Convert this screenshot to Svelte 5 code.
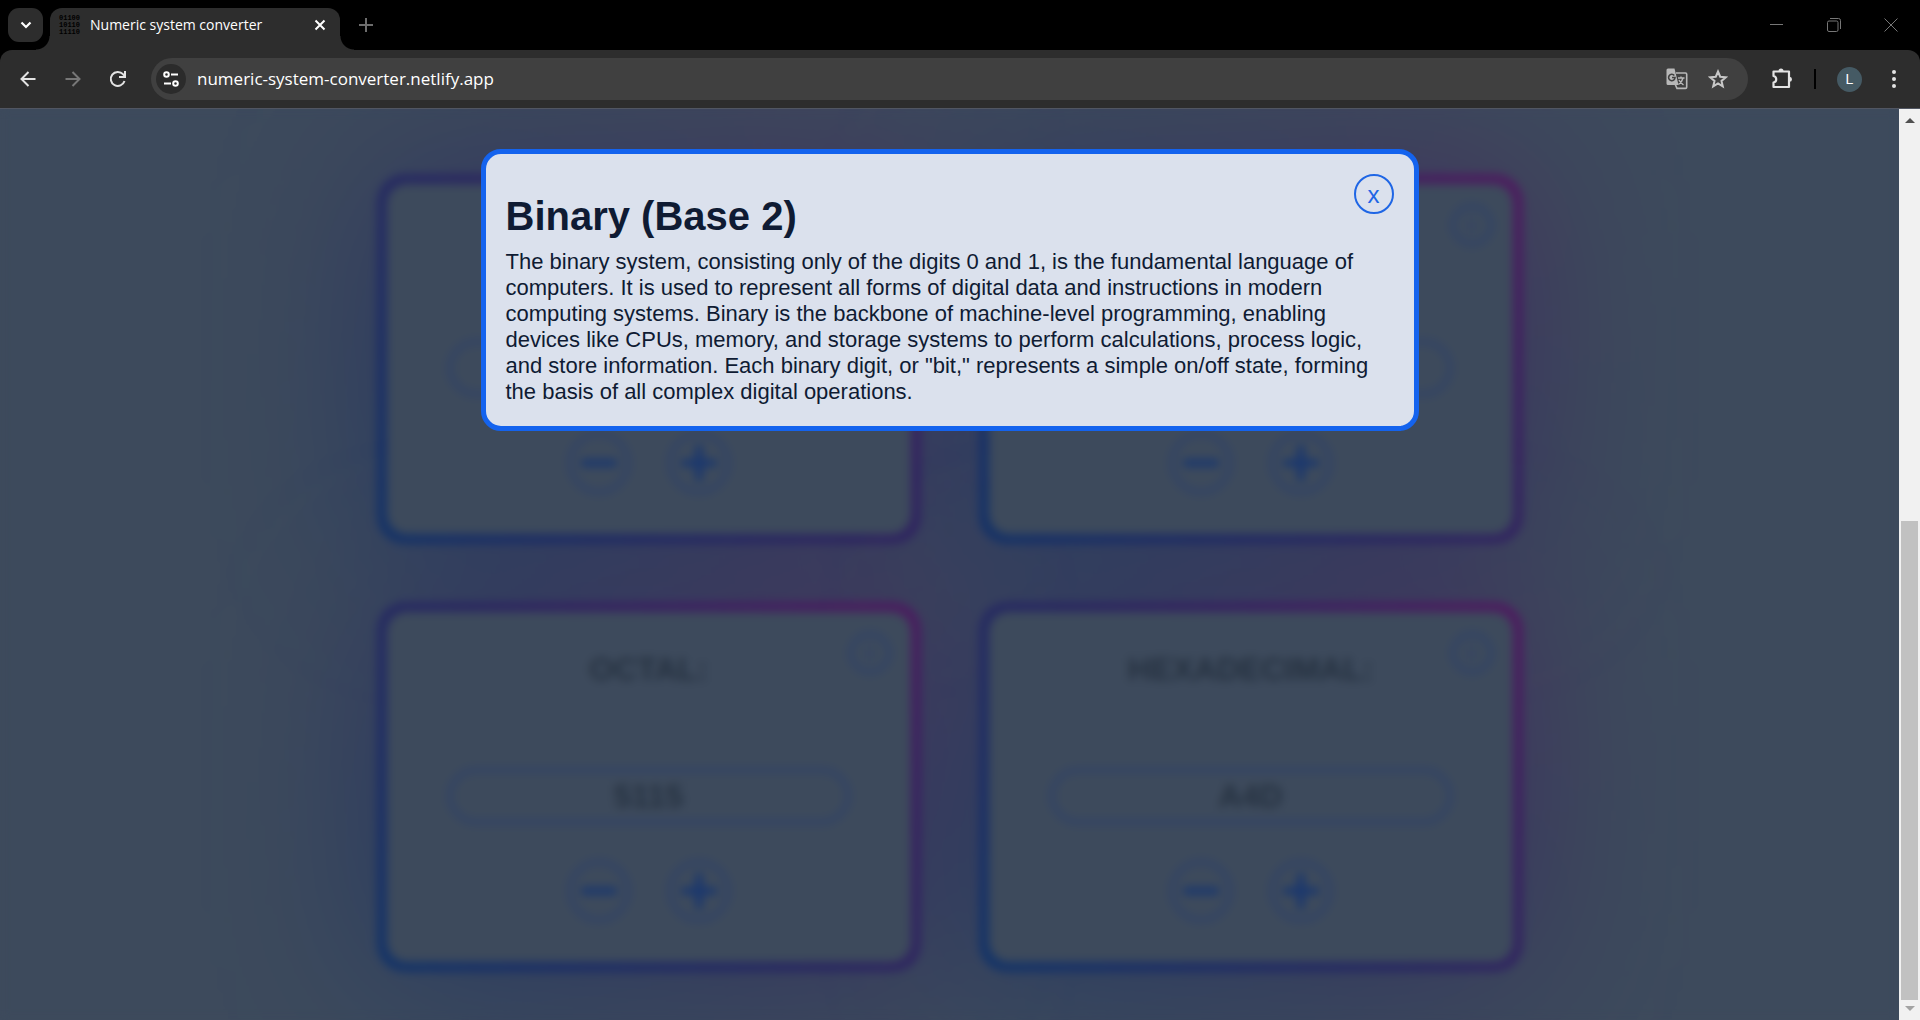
<script>
  const rows = [
    { id: 'decimal', label: 'Decimal:', value: '', covered: true },
    { id: 'binary', label: 'Binary:', value: '', covered: true },
    { id: 'octal', label: 'Octal:', value: '5115', covered: false },
    { id: 'hex', label: 'Hexadecimal:', value: 'A4D', covered: false },
  ];
</script>

<div class="window">
  <header>
    <div class="tabs">
      <button class="search" aria-label="Search tabs">
        <svg width="12" height="8" viewBox="0 0 12 8"><path d="M1.5 1.5 6 6l4.500-4.500" fill="none" stroke="#fff" stroke-width="2.200" /></svg>
      </button>
      <div class="tab">
        <span class="fav" aria-hidden="true"><span>01100</span><span>10110</span><span>11110</span></span>
        <span class="title">Numeric system converter</span>
        <button class="bare" aria-label="Close tab">
          <svg width="12" height="12" viewBox="0 0 12 12"><path d="M1.500 1.500l9 9m0-9l-9 9" stroke="#fff" stroke-width="2" /></svg>
        </button>
      </div>
      <button class="bare new" aria-label="New tab">
        <svg width="14" height="14" viewBox="0 0 14 14"><path d="M7 0v14M0 7h14" stroke="#6d6d6d" stroke-width="2" /></svg>
      </button>
      <div class="wincontrols">
        <button class="bare" aria-label="Minimize"><svg width="14" height="14" viewBox="0 0 14 14"><path d="M0 6.500h13" stroke="#777" /></svg></button>
        <button class="bare" aria-label="Restore"><svg width="14" height="14" viewBox="0 0 14 14" fill="none" stroke="#777"><rect x=".5" y="3" width="10.500" height="10.500" rx="1.500" /><path d="M3 .5h8.500a2 2 0 0 1 2 2V11" /></svg></button>
        <button class="bare" aria-label="Close window"><svg width="14" height="14" viewBox="0 0 14 14"><path d="M.5 .5l13 13m0-13l-13 13" stroke="#777" /></svg></button>
      </div>
    </div>
    <div class="toolbar">
      <button class="bare nav" aria-label="Back"><svg width="16" height="16" viewBox="0 0 16 16" fill="none" stroke="#e3e3e3" stroke-width="2"><path d="M15.500 8H2M8.500 1 1.500 8l7 7" /></svg></button>
      <button class="bare nav" aria-label="Forward"><svg width="16" height="16" viewBox="0 0 16 16" fill="none" stroke="#777" stroke-width="2"><path d="M.5 8H14M7.500 1l7 7-7 7" /></svg></button>
      <button class="bare nav" aria-label="Reload"><svg width="18" height="18" viewBox="0 0 18 18" fill="none" stroke="#e3e3e3" stroke-width="2"><path d="M15.500 11a7 7 0 1 1-1.500-6.800L16 6M16 1v6h-6" /></svg></button>
      <div class="omnibox">
        <button class="site" aria-label="Site information">
          <svg width="16" height="16" viewBox="0 0 16 16" fill="none" stroke="#fff" stroke-width="2"><circle cx="3.500" cy="3.500" r="2.300" /><path d="M8 3.500h7M1 12.500h7" /><circle cx="12.500" cy="12.500" r="2.300" /></svg>
        </button>
        <input aria-label="Address" value="numeric-system-converter.netlify.app" />
        <button class="bare tr" aria-label="Translate">
          <svg width="22" height="22" viewBox="0 0 22 22"><path d="M10 5h9.500a1.200 1.200 0 0 1 1.200 1.200v13a1.200 1.200 0 0 1-1.200 1.200H11L9 16" fill="none" stroke="#b8b8b8" stroke-width="1.600" /><path d="M2 .5h6.500l4 16.500H2a1.500 1.500 0 0 1-1.500-1.500V2A1.500 1.500 0 0 1 2 .5z" fill="#b8b8b8" /><path d="M8.300 7.500A3.200 3.200 0 1 0 9 9.500H6" fill="none" stroke="#404040" stroke-width="1.600" /><path d="M12 10h6.500M15 8.500V10M17 10c-.6 3-2.500 5-4.500 6.500M13 12c1 2 2.500 3.500 4.500 5" fill="none" stroke="#b8b8b8" stroke-width="1.400" /></svg>
        </button>
        <button class="bare" aria-label="Bookmark">
          <svg width="20" height="20" viewBox="0 0 20 20"><path d="M10 2.500l2.200 5.200 5.600.500-4.300 3.700 1.300 5.500-4.800-2.900-4.800 2.900 1.300-5.500L2.200 8.200l5.600-.5z" fill="none" stroke="#c8c8c8" stroke-width="2" /></svg>
        </button>
      </div>
      <button class="bare ext" aria-label="Extensions">
        <svg width="22" height="22" viewBox="0 0 22 22"><path d="M2.500 3.500H18V19H2.500V14.500a3.300 3.300 0 0 0 0-6.500z" fill="none" stroke="#e3e3e3" stroke-width="2.200" stroke-linejoin="round" /><path d="M7.500 3a2.500 2.500 0 0 1 5 0zM18.500 8.800a2.500 2.500 0 0 1 0 5z" fill="#e3e3e3" /></svg>
      </button>
      <span class="sep"></span>
      <button class="avatar" aria-label="Profile">L</button>
      <button class="bare menu" aria-label="Menu"><svg width="4" height="18" viewBox="0 0 4 18" fill="#e3e3e3"><circle cx="2" cy="2" r="2" /><circle cx="2" cy="9" r="2" /><circle cx="2" cy="16" r="2" /></svg></button>
    </div>
  </header>

  <div class="viewport">
    <main>
      <div class="grid">
        {#each rows as row}
          <section class="card" class:covered={row.covered}>
            <div class="face">
              <button class="info" aria-label="About {row.label}">i</button>
              <label for={row.id}>{row.label}</label>
              <input id={row.id} value={row.value} />
              <div class="steps">
                <button aria-label="Decrease"><svg width="40" height="40" viewBox="0 0 40 40"><path d="M2 20h36" /></svg></button>
                <button aria-label="Increase"><svg width="40" height="40" viewBox="0 0 40 40"><path d="M2 20h36M20 2v36" /></svg></button>
              </div>
            </div>
          </section>
        {/each}
      </div>
      <div class="overlay">
        <div class="dialog" role="dialog" aria-labelledby="dialog-title">
          <button class="close" aria-label="Close">x</button>
          <h1 id="dialog-title">Binary (Base 2)</h1>
          <p>The binary system, consisting only of the digits 0 and 1, is the fundamental language of computers. It is used to represent all forms of digital data and instructions in modern computing systems. Binary is the backbone of machine-level programming, enabling devices like CPUs, memory, and storage systems to perform calculations, process logic, and store information. Each binary digit, or "bit," represents a simple on/off state, forming the basis of all complex digital operations.</p>
        </div>
      </div>
    </main>
    <div class="scroll" aria-hidden="true">
      <svg width="10" height="6" viewBox="0 0 10 6"><path d="M0 6l5-5 5 5z" fill="#505050" /></svg>
      <div class="track"><div class="thumb"></div></div>
      <svg width="10" height="6" viewBox="0 0 10 6"><path d="M0 0h10L5 5z" fill="#a3a3a3" /></svg>
    </div>
  </div>
</div>

<style>
  :global(body) { margin: 0; background: #000; }
  * { box-sizing: border-box; }
  button { padding: 0; font: inherit; cursor: pointer; }
  .window { height: 100vh; display: flex; flex-direction: column; overflow: hidden; font-family: "Liberation Sans", Arial, sans-serif; }
  .bare { display: grid; place-items: center; border: 0; background: none; }

  .tabs { height: 50px; display: flex; align-items: center; padding-left: 8px; }
  .search { width: 35px; height: 34px; border: 0; border-radius: 11px; background: #2d2d2d; display: grid; place-items: center; }
  .tab { position: relative; align-self: flex-end; width: 290px; height: 42px; margin-left: 7px; padding: 0 14px 8px 9px; border-radius: 12px 12px 0 0; background: #2d2d2d; display: flex; align-items: center; }
  .tab::before, .tab::after { content: ""; position: absolute; bottom: 0; width: 14px; height: 14px; }
  .tab::before { right: 100%; background: radial-gradient(circle at 0 0, transparent 13px, #2d2d2d 14px); }
  .tab::after { left: 100%; background: radial-gradient(circle at 100% 0, transparent 13px, #2d2d2d 14px); }
  .fav { width: 22px; display: flex; flex-direction: column; font: bold 7px/7px "Liberation Mono", monospace; color: #000; }
  .title { flex: 1; margin-left: 9px; color: #fff; font: 14px/20px "Open Sans", sans-serif; white-space: nowrap; }
  .new { margin-left: 19px; }
  .wincontrols { margin-left: auto; display: flex; gap: 43px; padding-right: 22px; }

  .toolbar { height: 59px; background: #2d2d2d; border-bottom: 1px solid #515662; border-radius: 12px 12px 0 0; display: flex; align-items: center; padding: 0 20px 0 14px; }
  .nav { width: 28px; height: 28px; margin-right: 17px; }
  .omnibox { flex: 1; height: 42px; margin-left: 2px; border-radius: 21px; background: #404040; display: flex; align-items: center; padding: 0 20px 0 5px; gap: 20px; }
  .site { width: 30px; height: 30px; border: 0; border-radius: 50%; background: #2b2b2b; display: grid; place-items: center; }
  .omnibox input { flex: 1; min-width: 0; margin-left: -9px; padding: 0; border: 0; outline: 0; background: none; color: #fff; font: 17px/24px "Open Sans", sans-serif; }
  .ext { margin-left: 23px; }
  .sep { width: 2px; height: 20px; margin-left: 21px; background: #000; }
  .avatar { width: 25px; height: 25px; margin-left: 21px; border: 0; border-radius: 50%; background: #455a64; color: #fff; font-size: 14px; }
  .menu { margin-left: 30px; margin-right: 4px; }

  .viewport { flex: 1; min-height: 0; display: flex; }
  main { position: relative; flex: 1; overflow: hidden; background: #3d4a5c; display: flex; flex-direction: column; justify-content: flex-end; }
  .grid { display: grid; grid-template-columns: repeat(2, 544px); justify-content: center; gap: 58px; padding-bottom: 48px; }
  .card { position: relative; height: 370px; padding: 10px; }
  .card::before, .card::after { content: ""; position: absolute; inset: 0; border-radius: 28px; background: linear-gradient(45deg, #133468, #2a2860 50%, #4e1c5f); }
  .card::before { filter: blur(80px); opacity: .65; }
  .face { position: relative; z-index: 1; height: 100%; border-radius: 20px; background: #3d4a5c; display: flex; flex-direction: column; align-items: center; padding-top: 39px; }
  .covered label { visibility: hidden; }
  label { font-size: 32px; line-height: 36px; font-weight: bold; text-transform: uppercase; color: #253140; }
  .face input { width: 402px; height: 56px; margin-top: 81px; border: 4px solid #2e4168; border-radius: 28px; background: none; text-align: center; font: bold 32px/36px "Liberation Sans", Arial, sans-serif; color: #253140; }
  .steps { display: flex; gap: 38px; margin-top: 36px; }
  .steps button { width: 62px; height: 62px; border: 4px solid #2e4168; border-radius: 50%; background: none; display: grid; place-items: center; }
  .steps path { stroke: #18366f; stroke-width: 7px; }
  .info { position: absolute; top: 20px; right: 20px; width: 42px; height: 42px; border: 4px solid #2e4168; border-radius: 50%; background: none; color: #2e4168; font-size: 24px; font-weight: bold; }

  .overlay { position: absolute; inset: 0; z-index: 2; backdrop-filter: blur(5px); display: flex; align-items: flex-start; justify-content: center; padding-top: 40px; }
  .dialog { position: relative; width: 938px; padding: 39px 20px 21px; border: 5px solid #1463ee; border-radius: 20px; background: #dbe1ed; color: #0f1b33; }
  h1 { margin: 0; font-size: 40px; line-height: 46px; }
  p { margin: 10px 0 0; font-size: 22px; line-height: 26px; }
  .close { position: absolute; top: 20px; right: 20px; width: 40px; height: 40px; padding-top: 2px; border: 2px solid #1f66e5; border-radius: 50%; background: none; color: #1f66e5; font-size: 24px; line-height: 24px; }

  .scroll { width: 21px; background: #f1f1f1; display: flex; flex-direction: column; align-items: center; padding: 8px 0; }
  .track { flex: 1; align-self: stretch; display: flex; flex-direction: column; justify-content: flex-end; margin: 6px 2px; }
  .thumb { height: 55%; background: #c1c1c1; }
</style>
